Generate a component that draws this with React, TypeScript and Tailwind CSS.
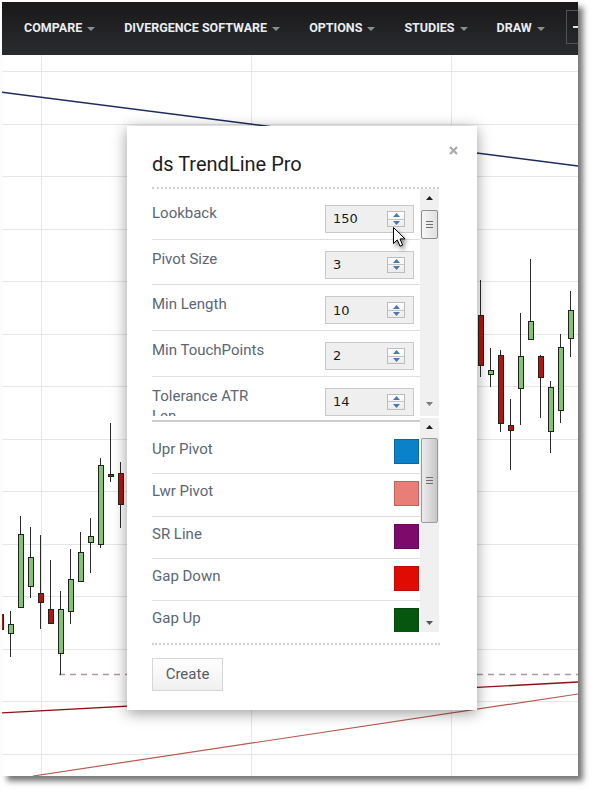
import React from 'react'

const navItems = ['COMPARE', 'DIVERGENCE SOFTWARE', 'OPTIONS', 'STUDIES', 'DRAW']

const numberRows = [
  { label: 'Lookback', value: '150' },
  { label: 'Pivot Size', value: '3' },
  { label: 'Min Length', value: '10' },
  { label: 'Min TouchPoints', value: '2' },
  { label: 'Tolerance ATR Len', value: '14' },
]

const colorRows = [
  { label: 'Upr Pivot', cls: 'bg-[#0a82c9] border-[#0b66a3]' },
  { label: 'Lwr Pivot', cls: 'bg-[#e97d77] border-[#c3625c]' },
  { label: 'SR Line', cls: 'bg-[#7e0a6c] border-[#690959]' },
  { label: 'Gap Down', cls: 'bg-[#e00b02] border-[#c20a02]' },
  { label: 'Gap Up', cls: 'bg-[#06560f] border-[#04480b]' },
]

// [x, wickTop, wickBottom, bodyTop, bodyBottom, up]
type Candle = [number, number, number, number, number, boolean]
const candles: Candle[] = [
  [1, 606, 634, 614, 630, false],
  [11, 611, 657, 624, 634, true],
  [21, 516, 608, 534, 608, true],
  [31, 527, 598, 557, 587, true],
  [41, 535, 629, 593, 603, false],
  [51, 560, 624, 609, 624, false],
  [61, 591, 675, 609, 654, true],
  [71, 549, 624, 579, 612, true],
  [81, 532, 582, 552, 582, true],
  [91, 518, 573, 536, 543, true],
  [101, 458, 548, 465, 545, true],
  [111, 423, 482, 474, 477, false],
  [121, 462, 528, 473, 505, false],
  [481, 280, 377, 315, 366, false],
  [491, 348, 387, 370, 375, true],
  [501, 350, 432, 355, 424, false],
  [511, 399, 470, 425, 431, false],
  [521, 313, 425, 356, 389, true],
  [531, 259, 340, 321, 340, true],
  [541, 355, 418, 356, 378, false],
  [551, 381, 453, 387, 432, true],
  [561, 334, 423, 347, 411, true],
  [571, 291, 357, 310, 339, true],
]

function Caret() {
  return (
    <span className="ml-[5px] inline-block w-0 h-0 border-l-[4px] border-r-[4px] border-t-[4px] border-l-transparent border-r-transparent border-t-[#8a8d91]" />
  )
}

function Nav() {
  return (
    <div className="h-[53px] shrink-0 bg-linear-to-b from-[#1a1819] to-[#292c2f] flex items-center pl-[22px] whitespace-nowrap">
      <div className="flex items-center gap-[29px] shrink-0">
        {navItems.map((t) => (
          <div key={t} className="flex items-center shrink-0 text-[12.5px] font-bold text-[#e8edf2]">
            {t}
            <Caret />
          </div>
        ))}
      </div>
      <div className="self-start mt-[8px] ml-[21px] w-[34px] h-[34px] shrink-0 border border-[#4f5256] flex items-center pl-[6px]">
        <div className="w-[12px] h-[2px] bg-[#e2e2e2]" />
      </div>
    </div>
  )
}

function Chart() {
  const hs = Array.from({ length: 14 }, (_, i) => Math.round(71 + 52.5 * i) + 0.5)
  return (
    <svg width="576" height="721" className="block shrink-0">
      <g transform="translate(-2 -55)">
        {hs.map((y) => (
          <line key={y} x1={0} x2={600} y1={y} y2={y} stroke="#e6e6e6" />
        ))}
        {[41, 251, 451].map((x) => (
          <line key={x} x1={x + 0.5} x2={x + 0.5} y1={55} y2={790} stroke="#e6e6e6" />
        ))}
        <line x1={0} y1={92} x2={578} y2={166} stroke="#1d2c5c" strokeWidth={1.4} />
        <line x1={0} y1={713} x2={578} y2={682} stroke="#8a1414" strokeWidth={1.4} />
        <line x1={33} y1={776} x2={578} y2={694} stroke="#b65a50" strokeWidth={1.2} />
        <line x1={59} y1={674.5} x2={578} y2={674.5} stroke="#a898a6" strokeWidth={1.5} strokeDasharray="6 5" />
        {candles.map(([x, wt, wb, bt, bb, up]) => (
          <g key={x}>
            <rect x={x - 1} y={wt} width={1} height={wb - wt} fill="#2a2a2a" />
            <rect x={x - 3} y={bt} width={6} height={Math.max(bb - bt, 3)} fill="#222" />
            <rect x={x - 2} y={bt + 1} width={4} height={Math.max(bb - bt - 2, 1)} fill={up ? '#84c274' : '#b3160c'} />
          </g>
        ))}
      </g>
    </svg>
  )
}

function Spinner() {
  return (
    <div className="w-[18px] h-[16px] flex flex-col border border-[#bcbcbc] bg-linear-to-b from-white to-[#ececec]">
      <div className="flex-1 flex items-center justify-center border-b border-[#c4c4c4]">
        <svg width="7" height="4">
          <path d="M0 4L3.5 0L7 4Z" fill="#4a78b4" />
        </svg>
      </div>
      <div className="flex-1 flex items-center justify-center">
        <svg width="7" height="4">
          <path d="M0 0L7 0L3.5 4Z" fill="#4a78b4" />
        </svg>
      </div>
    </div>
  )
}

function Grip() {
  return (
    <div className="flex flex-col gap-[2px] items-center">
      <div className="w-[7px] h-px bg-[#6e6e6e]" />
      <div className="w-[7px] h-px bg-[#6e6e6e]" />
      <div className="w-[7px] h-px bg-[#6e6e6e]" />
    </div>
  )
}

function ScrollBar({ h, thumbH, thumbMt, big }: { h: string; thumbH: string; thumbMt: string; big?: boolean }) {
  return (
    <div className={`w-[19px] ${h} bg-[#f0f0f0] flex flex-col shrink-0`}>
      <div className="h-[18px] flex items-center justify-center shrink-0">
        <svg width="7" height="4">
          <path d="M0 4L3.5 0L7 4Z" fill="#222" />
        </svg>
      </div>
      <div
        className={`${thumbMt} ${thumbH} mx-[1px] shrink-0 rounded-[2px] border flex items-center justify-center ${
          big
            ? 'border-[#9a9a9a] bg-linear-to-r from-[#ececec] via-[#dadada] to-[#c6c6c6]'
            : 'border-[#8f8f8f] bg-linear-to-r from-[#f6f6f6] to-[#e0e0e0]'
        }`}
      >
        <Grip />
      </div>
      <div className="flex-1" />
      <div className={`h-[18px] flex items-center justify-center shrink-0 ${big ? '' : 'mb-[3px]'}`}>
        <svg width="7" height="4">
          <path d="M0 0L7 0L3.5 4Z" fill={big ? '#555' : '#7a7a7a'} />
        </svg>
      </div>
    </div>
  )
}

function Dialog() {
  return (
    <div className="absolute left-[125px] top-[124px] w-[350px] h-[584px] bg-white shadow-[0_3px_14px_rgba(0,0,0,0.4)] pl-[25px] pt-[26px]">
      <div className="absolute left-[322px] top-[20px]">
        <svg width="9" height="9">
          <path d="M1 1L8 8M8 1L1 8" stroke="#ababab" strokeWidth="2.2" />
        </svg>
      </div>
      <div className="text-[20px] leading-[24px] text-[#1c1c1c]">ds TrendLine Pro</div>
      <div className="mt-[11px] w-[287px] border-t-2 border-dotted border-[#cfcfcf]" />

      <div className="flex w-[287px] h-[227px]">
        <div className="w-[268px] overflow-hidden pt-[5px]">
          {numberRows.map((r) => (
            <div key={r.label} className="h-[45.7px] border-b border-[#dedede] flex justify-between">
              <div className="w-[120px] pt-[9px] text-[15px] leading-[20px] text-[#5b6676]">{r.label}</div>
              <div className="mt-[11px] mr-[6px] w-[89px] h-[28px] shrink-0 bg-[#efefef] border border-[#c9c9c9] flex items-center justify-between pl-[7px] pr-[8px]">
                <span className="font-['DejaVu_Sans',sans-serif] text-[13px] text-[#1a1a1a]">{r.value}</span>
                <Spinner />
              </div>
            </div>
          ))}
        </div>
        <ScrollBar h="h-[227px]" thumbMt="mt-[3px]" thumbH="h-[29px]" />
      </div>

      <div className="flex w-[287px] h-[216px]">
        <div className="w-[268px] overflow-hidden pt-[4px]">
          <div className="h-[2px] bg-[#cccccc]" />
          <div className="pt-[10px]">
            {colorRows.map((r) => (
              <div key={r.label} className="h-[42.3px] border-b border-[#dedede] flex justify-between">
                <div className="pt-[7px] text-[15px] leading-[20px] text-[#5b6676]">{r.label}</div>
                <div className={`mt-[7px] mr-[1px] w-[25px] h-[25px] border ${r.cls}`} />
              </div>
            ))}
          </div>
        </div>
        <div className="mt-[2px]">
          <ScrollBar h="h-[214px]" thumbMt="mt-[2px]" thumbH="h-[85px]" big />
        </div>
      </div>

      <div className="mt-[11px] w-[288px] border-t-2 border-dotted border-[#cfcfcf]" />
      <button className="mt-[13px] h-[33px] w-[71px] border border-[#d6d6d6] bg-linear-to-b from-white to-[#f0f0f0] text-[15px] text-[#585c66] flex items-center justify-center">
        Create
      </button>
    </div>
  )
}

function Cursor() {
  return (
    <div className="absolute left-[391px] top-[225px] drop-shadow-[2px_3px_2px_rgba(0,0,0,0.45)]">
      <svg width="14" height="21">
        <path d="M0.5 0.5 L0.5 16.5 L4.3 12.9 L7 19.2 L9.6 18.1 L7 11.9 L12 11.9 Z" fill="#fff" stroke="#000" strokeWidth="1" />
      </svg>
    </div>
  )
}

export default function App() {
  return (
    <div className="w-[592px] h-[790px] bg-white pl-[2px] pt-[2px] font-['Roboto',sans-serif]">
      <div className="relative w-[576px] h-[774px] bg-white overflow-hidden shadow-[5px_5px_6px_rgba(0,0,0,0.55)] flex flex-col">
        <Nav />
        <Chart />
        <Dialog />
        <Cursor />
      </div>
    </div>
  )
}
